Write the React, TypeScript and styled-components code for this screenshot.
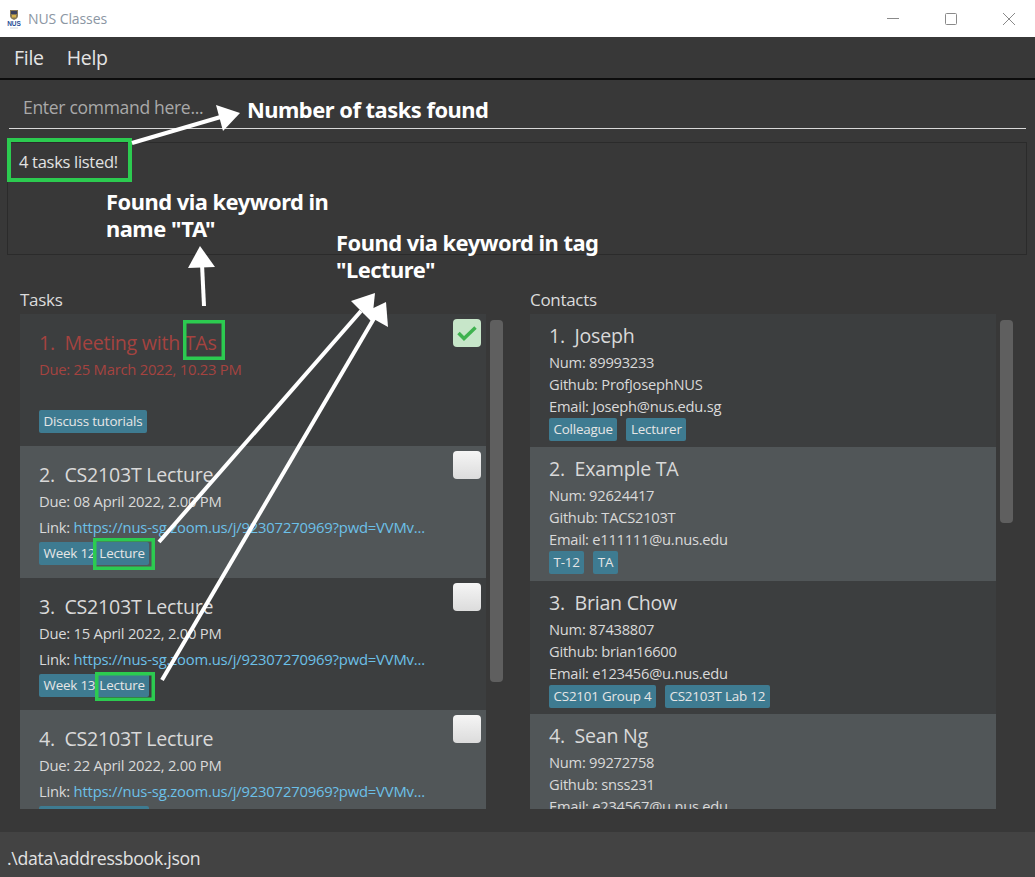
import React from 'react';
import styled, { createGlobalStyle } from 'styled-components';

const Global = createGlobalStyle`
  html, body { margin: 0; padding: 0; background: #383838; }
  * { box-sizing: border-box; }
`;
const FONT = `"Open Sans", "Noto Sans", sans-serif`;

const Page = styled.div`
  position: relative; width: 100%; height: 100vh; overflow: hidden;
  display: flex; flex-direction: column;
  background: #383838; font-family: ${FONT}; color: #d9d9d9;
`;
const TitleBar = styled.header`
  height: 37px; flex: none; background: #fff; display: flex; align-items: center;
  padding: 0 20px 0 7px;
`;
const WindowTitle = styled.span`
  margin-left: 7px; font-size: 14px; letter-spacing: -0.1px; color: #8b96a3; flex: 1;
`;
const WindowControls = styled.div`display: flex; gap: 46px; align-items: center;`;
const MenuBar = styled.nav`
  height: 43px; flex: none; display: flex; align-items: center; gap: 23px;
  padding: 0 14px; background: #383838; border-bottom: 2px solid #0c0c0c;
`;
const MenuItem = styled.span`font-size: 19.5px; letter-spacing: -0.3px; color: #e4e4e4;`;
const CommandRow = styled.div`padding: 0 9px; height: 49px; flex: none;`;
const CommandInput = styled.input`
  width: 100%; height: 100%; background: transparent; border: 0; border-bottom: 1px solid #d8d8d8;
  padding: 13px 14px 7px; outline: none; font-family: ${FONT}; font-size: 17.5px; letter-spacing: -0.3px; color: #ddd;
  &::placeholder { color: #a9a9a9; opacity: 1; }
`;
const ResultBox = styled.div`
  height: 113px; flex: none; margin: 13px 8px 0 7px; padding: 8px 11px;
  border: 1px solid #2b2b2b; font-size: 16.5px; letter-spacing: -0.3px; line-height: 22px; color: #e2e2e2;
`;
const Columns = styled.main`
  flex: 1; display: flex; gap: 27px; padding: 35px 0 0 20px; min-height: 0;
`;
const Panel = styled.section`width: 483px; display: flex; flex-direction: column;`;
const PanelLabel = styled.div`
  height: 24px; line-height: 20px; font-size: 17px; letter-spacing: -0.3px; color: #dcdcdc;
`;
const ListRow = styled.div`display: flex; gap: 4px; height: 495px;`;
const List = styled.div`width: 466px; height: 100%; overflow: hidden;`;
const ScrollTrack = styled.div`width: 13px; padding-top: 6px;`;
const ScrollThumb = styled.div<{ $h: number }>`
  width: 13px; height: ${p => p.$h}px; border-radius: 4px; background: #5f5f5f;
`;
const TaskCard = styled.article<{ $alt: boolean }>`
  height: 132px; display: flex; padding: 0 5px 0 19px;
  background: ${p => (p.$alt ? '#515658' : '#3c3e3f')};
`;
const TaskBody = styled.div<{ $done: boolean }>`
  flex: 1; min-width: 0; padding-top: 17px; color: ${p => (p.$done ? '#a5433f' : '#d9d9d9')};
`;
const CardTitle = styled.h3`
  margin: 0; font-weight: 400; font-size: 19.6px; line-height: 24px; letter-spacing: -0.25px; white-space: pre; color: inherit;
`;
const TaskLine = styled.div`
  height: 26px; line-height: 26px; font-size: 14.8px; letter-spacing: -0.25px; white-space: pre;
  &:first-of-type { margin-top: 1px; }
`;
const TaskLink = styled.span`color: #6cc0e8; letter-spacing: -0.18px;`;
const CheckBox = styled.div<{ $on: boolean }>`
  width: 28px; height: 28px; margin-top: 5px; flex: none; border-radius: 4px;
  display: flex; align-items: center; justify-content: center;
  background: ${p => (p.$on ? '#c7e6c9' : 'linear-gradient(#f5f5f5, #dcdcdc)')};
`;
const TagRow = styled.div<{ $mt: number }>`display: flex; gap: 9px; margin-top: ${p => p.$mt}px;`;
const Tag = styled.span<{ $pull?: boolean }>`
  height: 23px; line-height: 22px; padding: 0 4.5px; border-radius: 2px; background: #3e7b91;
  font-size: 13.4px; letter-spacing: -0.2px; color: #e6e6e6; white-space: pre;
  margin-left: ${p => (p.$pull ? '-14px' : '0')};
`;
const ContactCard = styled.article<{ $alt: boolean }>`
  height: 133.4px; padding: 10px 19px 0; background: ${p => (p.$alt ? '#515658' : '#3c3e3f')};
`;
const ContactLine = styled.div`
  height: 22px; line-height: 22px; font-size: 14.7px; letter-spacing: -0.25px; white-space: pre;
  &:first-of-type { margin-top: 3px; }
`;
const Footer = styled.footer`
  height: 45px; flex: none; background: #434343; display: flex; align-items: center; padding: 6px 7px 0;
  font-size: 17.7px; letter-spacing: -0.3px; color: #e2e2e2;
`;
const Overlay = styled.svg`position: absolute; left: 0; top: 0; pointer-events: none;`;
const Note = styled.div<{ $x: number; $y: number }>`
  position: absolute; left: ${p => p.$x}px; top: ${p => p.$y}px;
  font-family: "Noto Sans", "Open Sans", sans-serif; font-weight: 700; font-size: 21.9px; line-height: 27px;
  letter-spacing: -0.5px; color: #fff; white-space: pre; pointer-events: none;
`;

const tasks = [
  { n: 1, name: 'Meeting with TAs', due: '25 March 2022, 10.23 PM', link: false, done: true, tags: ['Discuss tutorials'] },
  { n: 2, name: 'CS2103T Lecture', due: '08 April 2022, 2.00 PM', link: true, done: false, tags: ['Week 12', 'Lecture'] },
  { n: 3, name: 'CS2103T Lecture', due: '15 April 2022, 2.00 PM', link: true, done: false, tags: ['Week 13', 'Lecture'] },
  { n: 4, name: 'CS2103T Lecture', due: '22 April 2022, 2.00 PM', link: true, done: false, tags: ['Week 14', 'Lecture'] },
];
const contacts = [
  { n: 1, name: 'Joseph', num: '89993233', gh: 'ProfJosephNUS', mail: 'Joseph@nus.edu.sg', tags: ['Colleague', 'Lecturer'] },
  { n: 2, name: 'Example TA', num: '92624417', gh: 'TACS2103T', mail: 'e111111@u.nus.edu', tags: ['T-12', 'TA'] },
  { n: 3, name: 'Brian Chow', num: '87438807', gh: 'brian16600', mail: 'e123456@u.nus.edu', tags: ['CS2101 Group 4', 'CS2103T Lab 12'] },
  { n: 4, name: 'Sean Ng', num: '99272758', gh: 'snss231', mail: 'e234567@u.nus.edu', tags: [] as string[] },
];

const Logo = () => (
  <svg width="14" height="20" viewBox="0 0 14 20">
    <path d="M3 1h8v6c0 2-2 3-4 4-2-1-4-2-4-4z" fill="#8a7a55" />
    <path d="M4 2h6v3H4z" fill="#3a3f5c" />
    <path d="M5 6h4v2.5H5z" fill="#d9b44a" />
    <text x="7" y="17" textAnchor="middle" fontFamily='"Liberation Sans", sans-serif' fontWeight="700" fontSize="6.5" fill="#1f4e96">NUS</text>
    <path d="M3 19h8" stroke="#c5ccd8" strokeWidth="0.8" />
  </svg>
);

const Green = ({ x, y, w, h, t = 3.5 }: { x: number; y: number; w: number; h: number; t?: number }) => (
  <rect x={x + t / 2} y={y + t / 2} width={w - t} height={h - t} fill="none" stroke="#2ccb50" strokeWidth={t} />
);

export default function App() {
  return (
    <Page>
      <Global />
      <TitleBar>
        <Logo />
        <WindowTitle>NUS Classes</WindowTitle>
        <WindowControls>
          <svg width="12" height="12" viewBox="0 0 12 12"><path d="M0 5.5h12" stroke="#8a8a8a" /></svg>
          <svg width="12" height="12" viewBox="0 0 12 12"><rect x=".5" y=".5" width="11" height="11" rx="1" fill="none" stroke="#8a8a8a" /></svg>
          <svg width="12" height="12" viewBox="0 0 12 12"><path d="M0 0l12 12M12 0L0 12" stroke="#8a8a8a" /></svg>
        </WindowControls>
      </TitleBar>
      <MenuBar>
        <MenuItem>File</MenuItem>
        <MenuItem>Help</MenuItem>
      </MenuBar>
      <CommandRow>
        <CommandInput placeholder="Enter command here..." readOnly />
      </CommandRow>
      <ResultBox>4 tasks listed!</ResultBox>
      <Columns>
        <Panel>
          <PanelLabel>Tasks</PanelLabel>
          <ListRow>
            <List>
              {tasks.map(t => (
                <TaskCard key={t.n} $alt={t.n % 2 === 0}>
                  <TaskBody $done={t.done}>
                    <CardTitle>{`${t.n}.  ${t.name}`}</CardTitle>
                    <TaskLine>{`Due: ${t.due}`}</TaskLine>
                    <TaskLine>
                      {t.link && <>Link: <TaskLink>https://nus-sg.zoom.us/j/92307270969?pwd=VVMv...</TaskLink></>}
                    </TaskLine>
                    <TagRow $mt={2}>
                      {t.tags.map((g, i) => <Tag key={g} $pull={i > 0}>{g}</Tag>)}
                    </TagRow>
                  </TaskBody>
                  <CheckBox $on={t.done}>
                    {t.done && (
                      <svg width="20" height="16" viewBox="0 0 20 16">
                        <path d="M1.5 8l5.5 5.5L18.5 2.5" fill="none" stroke="#3fb24f" strokeWidth="3.5" />
                      </svg>
                    )}
                  </CheckBox>
                </TaskCard>
              ))}
            </List>
            <ScrollTrack><ScrollThumb $h={362} /></ScrollTrack>
          </ListRow>
        </Panel>
        <Panel>
          <PanelLabel>Contacts</PanelLabel>
          <ListRow>
            <List>
              {contacts.map(c => (
                <ContactCard key={c.n} $alt={c.n % 2 === 0}>
                  <CardTitle>{`${c.n}.  ${c.name}`}</CardTitle>
                  <ContactLine>{`Num: ${c.num}`}</ContactLine>
                  <ContactLine>{`Github: ${c.gh}`}</ContactLine>
                  <ContactLine>{`Email: ${c.mail}`}</ContactLine>
                  <TagRow $mt={1}>
                    {c.tags.map(g => <Tag key={g}>{g}</Tag>)}
                  </TagRow>
                </ContactCard>
              ))}
            </List>
            <ScrollTrack><ScrollThumb $h={203} /></ScrollTrack>
          </ListRow>
        </Panel>
      </Columns>
      <Footer>.\data\addressbook.json</Footer>

      <Overlay width="1035" height="877" viewBox="0 0 1035 877">
        <Green x={7} y={138} w={125} h={44} t={4} />
        <Green x={183} y={320} w={42} h={40} />
        <Green x={93} y={538} w={62} h={32} />
        <Green x={95} y={672} w={60} h={29} />
        <g stroke="#fff" strokeWidth="4" fill="none">
          <path d="M132 143L224 116" />
          <path d="M204 306L202 264" />
          <path d="M159 542L361 311" />
          <path d="M162 680L376 315" />
        </g>
        <g fill="#fff">
          <path d="M240 113L216 105L223 131z" />
          <path d="M200 246L188 268L215 267z" />
          <path d="M375 293L351 301L372 322z" />
          <path d="M386 302L388 327L363 313z" />
        </g>
      </Overlay>
      <Note $x={247} $y={96}>Number of tasks found</Note>
      <Note $x={106} $y={188}>{'Found via keyword in\nname "TA"'}</Note>
      <Note $x={336} $y={229}>{'Found via keyword in tag\n"Lecture"'}</Note>
    </Page>
  );
}
